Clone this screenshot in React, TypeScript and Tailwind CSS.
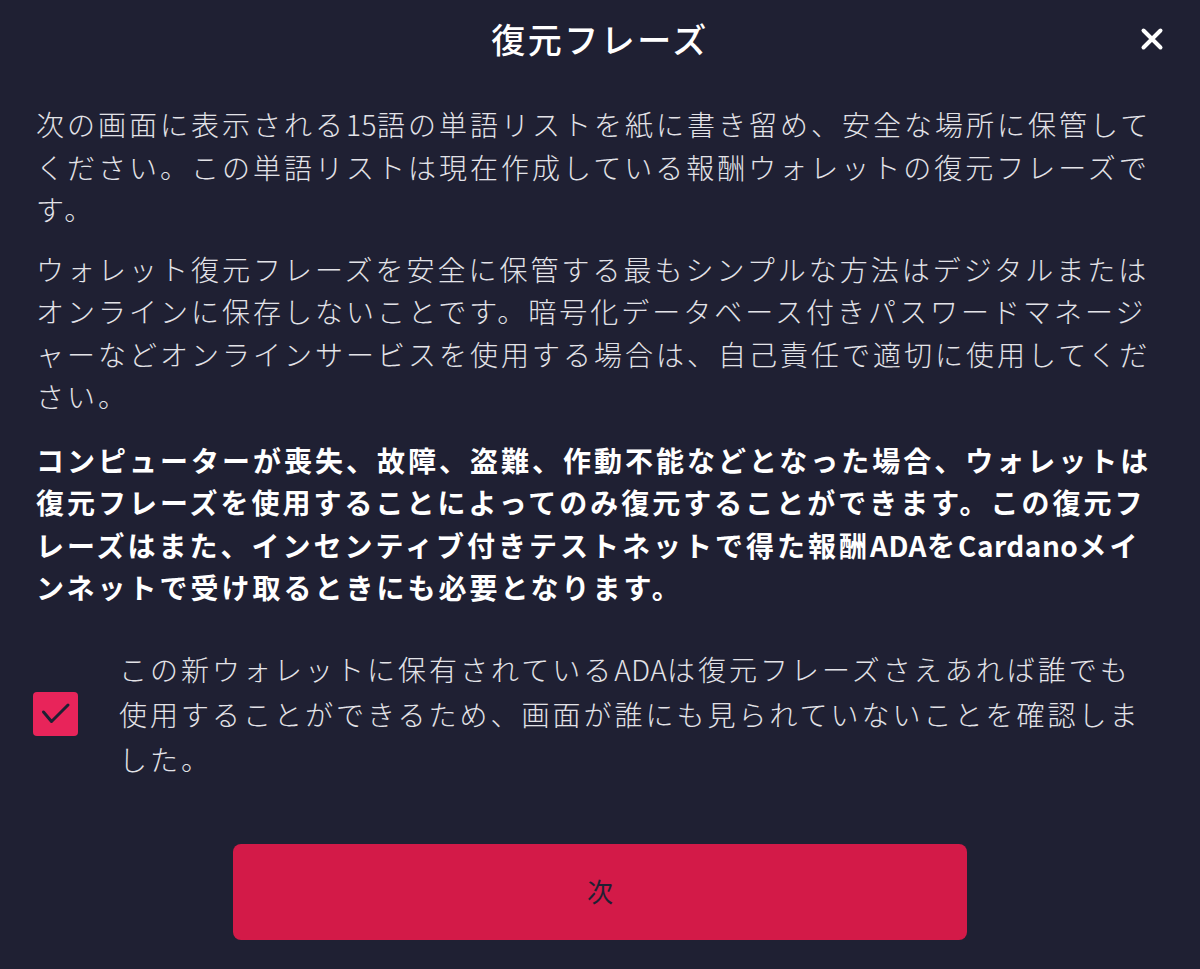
import React, { useState } from 'react';

const font = "font-['Noto_Sans_CJK_JP','Noto_Sans',sans-serif]";

function CloseIcon() {
  return (
    <svg width="24" height="24" viewBox="0 0 24 24" fill="none">
      <path d="M3.5 3.5 L20.5 20.5 M20.5 3.5 L3.5 20.5" stroke="#ffffff" strokeWidth="4" strokeLinecap="round" />
    </svg>
  );
}

function CheckIcon() {
  return (
    <svg width="30" height="30" viewBox="0 0 30 30" fill="none">
      <path d="M2.5 13 L10.5 22.5 L27 6" stroke="#1f2033" strokeWidth="3" strokeLinecap="round" strokeLinejoin="round" />
    </svg>
  );
}

// latin words are not spaced out like the kana
const Latin = ({ children }: { children: React.ReactNode }) => (
  <span className="tracking-[0.5px]">{children}</span>
);

export default function App() {
  const [checked, setChecked] = useState(true);

  return (
    <div className={`w-[1200px] h-[969px] bg-[#1f2033] text-[#e3e3e8] ${font} overflow-hidden`}>
      {/* Header */}
      <div className="relative h-[77px] flex items-center justify-center">
        <h1 className="text-[34px] font-medium tracking-[2.5px] text-white leading-none">復元フレーズ</h1>
        <button type="button" className="absolute right-[36px] top-[27px]" aria-label="閉じる">
          <CloseIcon />
        </button>
      </div>

      {/* Body */}
      <div className="px-[36px] pt-[26px] text-[28px] leading-[42.5px] tracking-[3px] font-light">
        <p>
          次の画面に表示される<Latin>15</Latin>語の単語リストを紙に書き留め、安全な場所に保管してください。この単語リストは現在作成している報酬ウォレットの復元フレーズです。
        </p>
        <p className="mt-[17px]">
          ウォレット復元フレーズを安全に保管する最もシンプルな方法はデジタルまたはオンラインに保存しないことです。暗号化データベース付きパスワードマネージャーなどオンラインサービスを使用する場合は、自己責任で適切に使用してください。
        </p>
        <p className="mt-[21px] font-bold text-white">
          コンピューターが喪失、故障、盗難、作動不能などとなった場合、ウォレットは復元フレーズを使用することによってのみ復元することができます。この復元フレーズはまた、インセンティブ付きテストネットで得た報酬<Latin>ADA</Latin>を<Latin>Cardano</Latin>メインネットで受け取るときにも必要となります。
        </p>

        {/* Confirmation */}
        <label className="mt-[38px] flex items-center cursor-pointer">
          <button
            type="button"
            onClick={() => setChecked(!checked)}
            className={`shrink-0 -ml-[3px] w-[45px] h-[44px] rounded-[4px] flex items-center justify-center ${checked ? 'bg-[#e8245a]' : 'border-2 border-[#e8245a]'}`}
          >
            {checked && <CheckIcon />}
          </button>
          <span className="ml-[41px] mr-[14px] flex-1 leading-[45px]">
            この新ウォレットに保有されている<Latin>ADA</Latin>は復元フレーズさえあれば誰でも使用することができるため、画面が誰にも見られていないことを確認しました。
          </span>
        </label>

        <div className="mt-[62px] flex justify-center">
          <button
            type="button"
            className="w-[734px] h-[96px] rounded-[8px] bg-[#d31a48] text-[#1f2033] text-[26px] tracking-normal font-normal"
          >
            次
          </button>
        </div>
      </div>
    </div>
  );
}
